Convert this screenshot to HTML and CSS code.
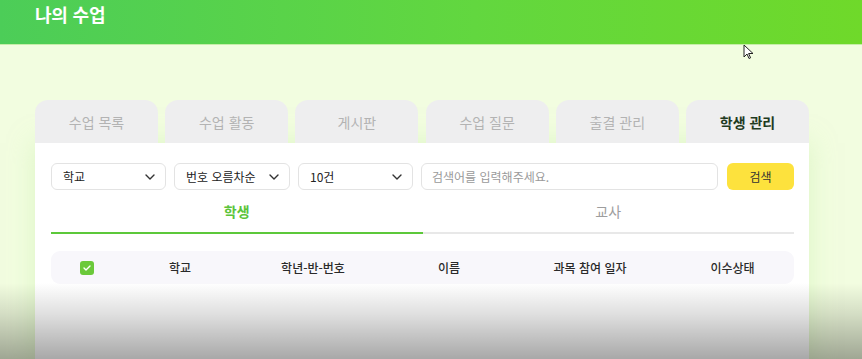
FILE: index.html
```html
<!DOCTYPE html>
<html lang="ko">
<head>
<meta charset="utf-8">
<title>나의 수업</title>
<link rel="stylesheet" href="styles.css">
</head>
<body>
<header class="topbar">
  <h1 class="title">나의 수업</h1>
</header>
<main class="page">
  <nav class="tabs">
    <div class="tab">수업 목록</div>
    <div class="tab">수업 활동</div>
    <div class="tab">게시판</div>
    <div class="tab">수업 질문</div>
    <div class="tab">출결 관리</div>
    <div class="tab active">학생 관리</div>
  </nav>
  <section class="panel">
    <div class="filters">
      <div class="select"><span>학교</span><svg class="chev" width="10" height="6" viewBox="0 0 10 6"><path d="M1 1l4 4 4-4" fill="none" stroke="#333" stroke-width="1.4" stroke-linecap="round" stroke-linejoin="round"/></svg></div>
      <div class="select"><span>번호 오름차순</span><svg class="chev" width="10" height="6" viewBox="0 0 10 6"><path d="M1 1l4 4 4-4" fill="none" stroke="#333" stroke-width="1.4" stroke-linecap="round" stroke-linejoin="round"/></svg></div>
      <div class="select"><span>10건</span><svg class="chev" width="10" height="6" viewBox="0 0 10 6"><path d="M1 1l4 4 4-4" fill="none" stroke="#333" stroke-width="1.4" stroke-linecap="round" stroke-linejoin="round"/></svg></div>
      <div class="search">검색어를 입력해주세요.</div>
      <button class="btn">검색</button>
    </div>
    <div class="subtabs">
      <div class="subtab on">학생</div>
      <div class="subtab">교사</div>
    </div>
    <div class="thead">
      <div class="cell"><span class="check"><svg width="8" height="6" viewBox="0 0 8 6"><path d="M1 3l2 2 4-4" fill="none" stroke="#fff" stroke-width="1.4" stroke-linecap="round" stroke-linejoin="round"/></svg></span></div>
      <div class="cell">학교</div>
      <div class="cell">학년-반-번호</div>
      <div class="cell">이름</div>
      <div class="cell">과목 참여 일자</div>
      <div class="cell">이수상태</div>
    </div>
  </section>
</main>
<div class="fade"></div>
<svg class="cursor" width="11" height="16" viewBox="0 0 11 16"><path d="M1 1v12l3-3 2 4.5 1.6-.7-2-4.3H10z" fill="#fff" stroke="#222" stroke-width="1"/></svg>
</body>
</html>
```
FILE: styles.css
```css
* { box-sizing: border-box; }
html, body { margin: 0; height: 100%; }
body {
  background: #f2fde0;
  font-family: "Noto Sans CJK KR", "Noto Sans", sans-serif;
  overflow: hidden;
  position: relative;
}
.topbar {
  height: 45px;
  background: linear-gradient(90deg, #4ccd58 0%, #62d73f 55%, #6fd92a 100%);
  border-bottom: 1px solid #c6eea8;
  padding: 0 35px;
}
.title {
  margin: 0;
  color: #fff;
  font-size: 18px;
  font-weight: 700;
  line-height: 28px;
  letter-spacing: -0.2px;
}
.page {
  margin: 55px 0 0 35px;
  width: 774px;
}
.tabs {
  display: flex;
  gap: 7.2px;
}
.tab {
  flex: 1;
  height: 43px;
  background: #eeeeef;
  border-radius: 13px 13px 0 0;
  color: #b3b3b3;
  font-size: 14px;
  display: flex;
  align-items: center;
  justify-content: center;
}
.tab.active {
  color: #1f3b1f;
  font-weight: 700;
}
.panel {
  background: #fff;
  padding: 20px 15px 80px 16px;
  box-shadow: 0 0 24px rgba(200, 240, 170, 0.5);
}
.filters {
  display: flex;
  gap: 8px;
  height: 27px;
}
.select {
  width: 115px;
  border: 1px solid #e3e3e3;
  border-radius: 6px;
  display: flex;
  align-items: center;
  justify-content: space-between;
  padding: 0 10px 0 11px;
  font-size: 12px;
  color: #222;
}
.select:nth-child(2) { width: 116px; }
.search {
  flex: 1;
  border: 1px solid #e3e3e3;
  border-radius: 6px;
  display: flex;
  align-items: center;
  padding: 0 10px;
  font-size: 12px;
  color: #9a9a9a;
}
.btn {
  width: 67px;
  border: none;
  border-radius: 6px;
  background: #fde23d;
  font-family: inherit;
  font-size: 12px;
  color: #333;
  padding: 0;
  margin-left: 1px;
}
.subtabs {
  display: flex;
}
.subtab {
  flex: 1;
  height: 44px;
  display: flex;
  align-items: center;
  justify-content: center;
  font-size: 14px;
  color: #9d9d9d;
  border-bottom: 2px solid #e8e8e8;
  padding-bottom: 1px;
}
.subtab.on {
  color: #5cc43a;
  font-weight: 600;
  border-bottom-color: #5cc83a;
}
.thead {
  margin-top: 17px;
  height: 33px;
  background: #f8f7fb;
  border-radius: 9px;
  display: grid;
  grid-template-columns: 72px 114px 152px 120px 162px 1fr;
  align-items: center;
  font-size: 12px;
  font-weight: 500;
  color: #2a2a2a;
}
.cell {
  text-align: center;
  display: flex;
  justify-content: center;
}
.check {
  width: 14px;
  height: 14px;
  border-radius: 3px;
  background: #6bc93a;
  display: flex;
  align-items: center;
  justify-content: center;
}
.fade {
  position: absolute;
  left: 0;
  right: 0;
  top: 283px;
  height: 76px;
  background: linear-gradient(180deg, rgba(0,0,0,0) 0%, rgba(0,0,0,0.12) 40%, rgba(0,0,0,0.34) 100%);
  pointer-events: none;
}
.cursor {
  position: absolute;
  left: 743px;
  top: 44px;
}
```
